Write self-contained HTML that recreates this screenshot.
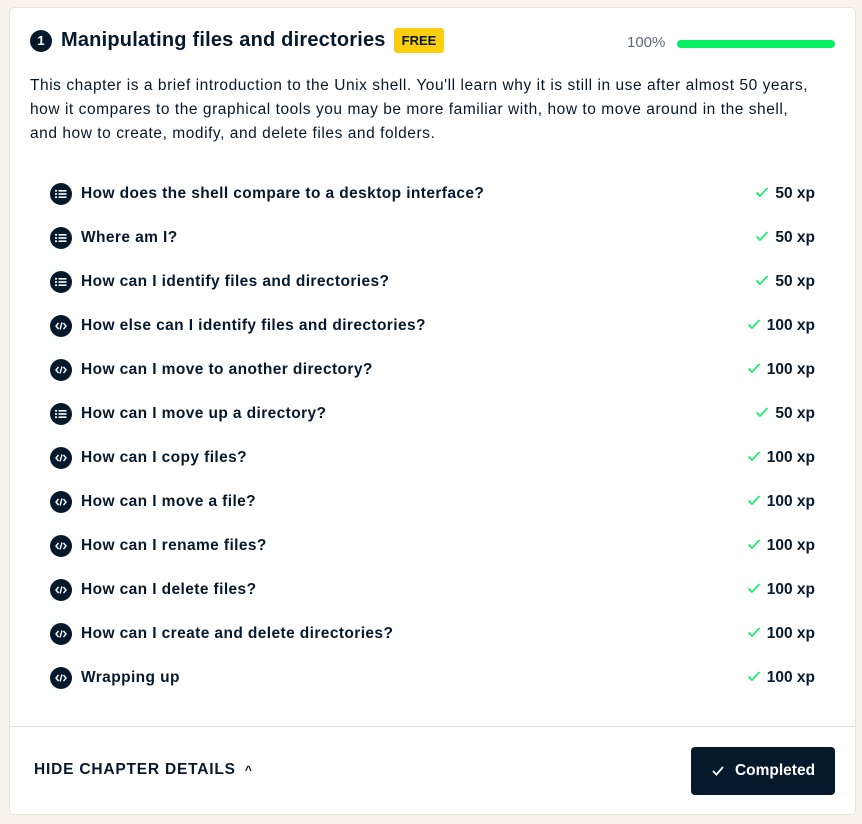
<!DOCTYPE html>
<html><head><style>
body{margin:0;background:#f7f3ea;font-family:"Liberation Sans",sans-serif;color:#05192d;width:862px;height:824px;overflow:hidden}
.card{position:absolute;left:10px;top:8px;width:845px;height:806px;background:#fff;border-radius:4px;box-shadow:0 0 0 1px #e8e4dc}
.h{position:absolute;left:20px;top:20px;display:flex;align-items:center}
.num{width:22px;height:22px;border-radius:50%;background:#05192d;color:#fff;font-size:13px;font-weight:bold;display:flex;align-items:center;justify-content:center}
.t{font-size:20px;font-weight:bold;margin-left:9px;letter-spacing:.2px}
.free{margin-left:8px;background:#fcce0d;font-size:13px;font-weight:bold;padding:5px 8px;border-radius:3px}
.pct{position:absolute;left:617px;top:26px;font-size:15px;color:#5d6a77}
.bar{position:absolute;left:667px;top:32px;width:158px;height:8px;border-radius:4px;background:#03ef62}
.desc{position:absolute;left:20px;top:66px;width:830px;font-size:15.5px;line-height:24px;color:#05192d;letter-spacing:.55px;white-space:nowrap}
.row{position:absolute;left:40px;width:765px;height:24px;display:flex;align-items:center;font-size:15.5px;font-weight:bold;letter-spacing:.4px}
.ic{width:22px;height:22px;border-radius:50%;background:#05192d;margin-right:9px;display:flex;align-items:center;justify-content:center}
.xp{margin-left:auto;display:flex;align-items:center;letter-spacing:0}
.xp svg{margin-right:6px;margin-top:-4px}
.div{position:absolute;left:0;top:718px;width:845px;height:1px;background:#e1ddd5}
.hide{position:absolute;left:24px;top:753px;font-size:15.5px;font-weight:bold;letter-spacing:.8px}
.btn{position:absolute;left:681px;top:739px;width:144px;height:48px;background:#05192d;color:#fff;border-radius:4px;display:flex;align-items:center;justify-content:center;font-weight:bold;font-size:15.5px}
</style></head><body>
<div class="card">
<div class="h"><div class="num">1</div><div class="t">Manipulating files and directories</div><div class="free">FREE</div></div>
<div class="pct">100%</div><div class="bar"></div>
<div class="desc">This chapter is a brief introduction to the Unix shell. You'll learn why it is still in use after almost 50 years,<br>how it compares to the graphical tools you may be more familiar with, how to move around in the shell,<br>and how to create, modify, and delete files and folders.</div>
<div class="div"></div>
<div class="hide">HIDE CHAPTER DETAILS <span style="font-size:12px;margin-left:4px">&#94;</span></div>
<div class="btn"><svg width="14" height="12" viewBox="0 0 14 12" style="margin-right:10px"><path d="M2 6l3.5 3.5L12 2" stroke="#fff" stroke-width="1.8" fill="none"/></svg>Completed</div>
<div id="rows"></div>
</div>
<script>
var items=[["How does the shell compare to a desktop interface?",0,50],["Where am I?",0,50],["How can I identify files and directories?",0,50],["How else can I identify files and directories?",1,100],["How can I move to another directory?",1,100],["How can I move up a directory?",0,50],["How can I copy files?",1,100],["How can I move a file?",1,100],["How can I rename files?",1,100],["How can I delete files?",1,100],["How can I create and delete directories?",1,100],["Wrapping up",1,100]];
var list='<svg width="12" height="10" viewBox="0 0 12 10"><g fill="#fff"><rect x="0" y="1" width="2" height="1.6"/><rect x="3.5" y="1" width="8" height="1.6"/><rect x="0" y="4.2" width="2" height="1.6"/><rect x="3.5" y="4.2" width="8" height="1.6"/><rect x="0" y="7.4" width="2" height="1.6"/><rect x="3.5" y="7.4" width="8" height="1.6"/></g></svg>';
var code='<svg width="12" height="10" viewBox="0 0 12 10"><path d="M3.5 2L1 5l2.5 3M8.5 2L11 5l-2.5 3M7 1.5L5 8.5" stroke="#fff" stroke-width="1.4" fill="none"/></svg>';
var chk='<svg width="14" height="12" viewBox="0 0 14 12"><path d="M1.5 6.5l3.5 3.5L12.5 2" stroke="#03ef62" stroke-width="1.6" fill="none"/></svg>';
var h='';items.forEach(function(it,i){h+='<div class="row" style="top:'+(174+44*i)+'px"><div class="ic">'+(it[1]?code:list)+'</div>'+it[0]+'<div class="xp">'+chk+it[2]+' xp</div></div>'});
document.getElementById('rows').innerHTML=h;
</script>
</body></html>
